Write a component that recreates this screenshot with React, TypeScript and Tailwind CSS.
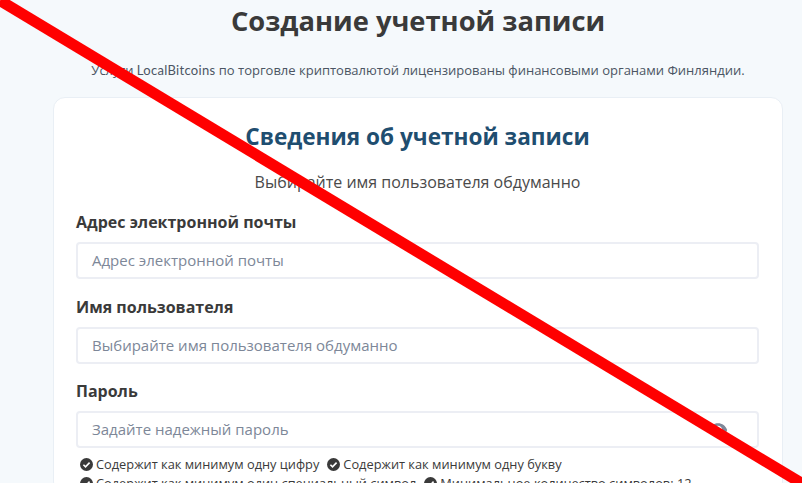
const checks = [
  ["Содержит как минимум одну цифру", "Содержит как минимум одну букву"],
  ["Содержит как минимум один специальный символ", "Минимальное количество символов: 12"],
];

function CheckBadge() {
  return (
    <svg viewBox="0 0 16 16" className="h-[13px] w-[13px] shrink-0">
      <circle cx="8" cy="8" r="8" fill="#3a3a3a" />
      <path d="M4.2 8.3l2.6 2.6 5-5.2" fill="none" stroke="#fff" strokeWidth="2" />
    </svg>
  );
}

function Field({ label, placeholder, children }: { label: string; placeholder: string; children?: React.ReactNode }) {
  return (
    <div className="mb-[15.5px]">
      <label className="mb-[8px] block text-base leading-[24px] font-bold text-[#3a3a3a]">{label}</label>
      <div className="relative flex h-[37px] items-center rounded border-2 border-[#eceef4] bg-white pl-[14px]">
        <span className="text-[15px] text-[#7d8798]">{placeholder}</span>
        {children}
      </div>
    </div>
  );
}

export default function App() {
  return (
    <div className="relative h-[483px] w-[802px] overflow-hidden bg-[#f5f9fc] font-['Open_Sans',sans-serif]">
      <div className="ml-[53px] flex w-[730px] flex-col items-center">
        <h1 className="mt-[3px] text-[27.3px] leading-[36px] font-bold text-[#3a3a3a]">Создание учетной записи</h1>
        <p className="mt-[22px] text-[13px] leading-[18px] text-[#4b5563]">
          Услуги <span className="font-['Lato',sans-serif] tracking-[0.3px]">LocalBitcoins</span> по торговле криптовалютой лицензированы финансовыми органами Финляндии.
        </p>
      </div>

      <div className="mt-[18px] ml-[53px] w-[730px] rounded-xl border border-[#e9eff5] bg-white pt-[21px] pr-[23px] pl-[22px]">
        <h2 className="text-center text-[22.6px] leading-[36px] font-bold text-[#1f4e70]">Сведения об учетной записи</h2>
        <p className="mt-[15px] mb-[16px] text-center text-base leading-[24px] text-[#4a4a4a]">Выбирайте имя пользователя обдуманно</p>

        <Field label="Адрес электронной почты" placeholder="Адрес электронной почты" />
        <Field label="Имя пользователя" placeholder="Выбирайте имя пользователя обдуманно" />
        <Field label="Пароль" placeholder="Задайте надежный пароль">
          <svg viewBox="0 0 24 24" className="absolute top-[7px] right-[29px] h-[20px] w-[20px]" fill="#7d8798">
            <path d="M12 4C7 4 2.7 7.1 1 12c1.7 4.9 6 8 11 8s9.3-3.1 11-8c-1.7-4.9-6-8-11-8zm0 13a5 5 0 110-10 5 5 0 010 10z" />
          </svg>
        </Field>

        <div className="mt-[-9px] flex flex-col pl-1">
          {checks.map((row) => (
            <div key={row[0]} className="flex gap-2">
              {row.map((text) => (
                <span key={text} className="flex items-center gap-[3px] text-[12.8px] leading-[19px] text-[#3a3a3a]">
                  <CheckBadge />
                  {text}
                </span>
              ))}
            </div>
          ))}
        </div>
      </div>

      <svg viewBox="0 0 802 483" className="pointer-events-none absolute inset-0 h-[483px] w-[802px]">
        <line x1="0" y1="0.5" x2="802" y2="483.5" stroke="#ff0000" strokeWidth="11" />
      </svg>
    </div>
  );
}
